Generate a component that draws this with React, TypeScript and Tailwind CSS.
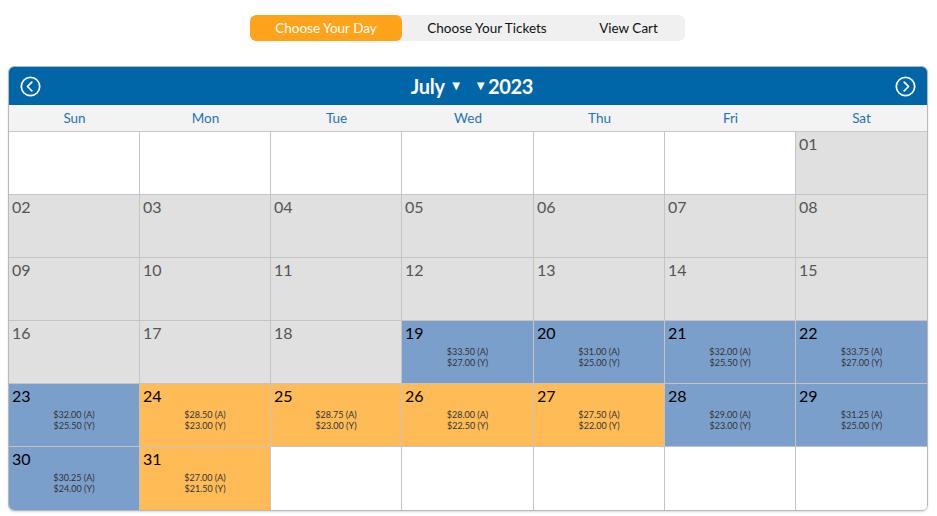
import React from 'react';

type Cell = { day?: string; kind: 'empty' | 'past' | 'blue' | 'orange'; a?: string; y?: string };

const cells: Cell[] = [
  ...Array.from({ length: 6 }, () => ({ kind: 'empty' as const })),
  ...['01','02','03','04','05','06','07','08','09','10','11','12','13','14','15','16','17','18'].map(d => ({ day: d, kind: 'past' as const })),
  { day: '19', kind: 'blue', a: '$33.50', y: '$27.00' },
  { day: '20', kind: 'blue', a: '$31.00', y: '$25.00' },
  { day: '21', kind: 'blue', a: '$32.00', y: '$25.50' },
  { day: '22', kind: 'blue', a: '$33.75', y: '$27.00' },
  { day: '23', kind: 'blue', a: '$32.00', y: '$25.50' },
  { day: '24', kind: 'orange', a: '$28.50', y: '$23.00' },
  { day: '25', kind: 'orange', a: '$28.75', y: '$23.00' },
  { day: '26', kind: 'orange', a: '$28.00', y: '$22.50' },
  { day: '27', kind: 'orange', a: '$27.50', y: '$22.00' },
  { day: '28', kind: 'blue', a: '$29.00', y: '$23.00' },
  { day: '29', kind: 'blue', a: '$31.25', y: '$25.00' },
  { day: '30', kind: 'blue', a: '$30.25', y: '$24.00' },
  { day: '31', kind: 'orange', a: '$27.00', y: '$21.50' },
  ...Array.from({ length: 5 }, () => ({ kind: 'empty' as const })),
];

const days = ['Sun', 'Mon', 'Tue', 'Wed', 'Thu', 'Fri', 'Sat'];

const bg: Record<Cell['kind'], string> = {
  empty: 'bg-white',
  past: 'bg-[#e0e0e0]',
  blue: 'bg-[#7b9fcb]',
  orange: 'bg-[#ffbb55]',
};

const Arrow = ({ dir }: { dir: 'left' | 'right' }) => (
  <svg width="21" height="21" viewBox="0 0 24 24" fill="none" stroke="white" strokeWidth="2" strokeLinecap="round" strokeLinejoin="round">
    <circle cx="12" cy="12" r="10.5" />
    {dir === 'left' ? <path d="M13.5 7l-5 5 5 5" /> : <path d="M10.5 7l5 5-5 5" />}
  </svg>
);

const cols = 'grid grid-cols-[131px_131px_131px_132px_131px_131px_131px]';

const App: React.FC = () => {
  return (
    <div className="w-[937px] h-[516px] bg-white pt-[15px] font-['Lato',sans-serif]">
      {/* Steps */}
      <div className="ml-[250px] flex w-[435px] h-[26px] rounded-md bg-[#f0f0f0] overflow-hidden text-[13.5px]">
        <div className="w-[152px] bg-[#ffa31a] text-white flex items-center justify-center rounded-md">Choose Your Day</div>
        <div className="w-[170px] flex items-center justify-center text-[#111]">Choose Your Tickets</div>
        <div className="flex-1 flex items-center justify-center text-[#111]">View Cart</div>
      </div>

      {/* Calendar */}
      <div className="mt-[25px] ml-[8px] w-[920px] rounded-md border border-[#b9b9b9] overflow-hidden shadow-[0_1px_2px_rgba(0,0,0,0.15)]">
        <div className="h-[38px] bg-[#0066a8] flex items-center justify-between px-[11px]">
          <Arrow dir="left" />
          <div className="text-white font-bold text-[20px] tracking-[-0.3px] flex items-center ml-[8px]">
            <span>July</span>
            <span className="text-[13px] ml-[5px]">▼</span>
            <span className="text-[13px] ml-[12px]">▼</span>
            <span className="ml-[1px]">2023</span>
          </div>
          <Arrow dir="right" />
        </div>
        <div className={`${cols} h-[27px] bg-[#f3f3f3] border-b border-[#c8c8c8]`}>
          {days.map(d => (
            <div key={d} className="flex items-center justify-center text-[13.5px] text-[#1f73b5]">{d}</div>
          ))}
        </div>
        <div className={cols}>
          {cells.map((c, i) => (
            <div
              key={i}
              className={`h-[63px] ${bg[c.kind]} ${i % 7 !== 6 ? 'border-r' : ''} ${i < 35 ? 'border-b' : ''} border-[#c4c4c4] px-[3px] pt-[2px]`}
            >
              {c.day && (
                <div className={`text-[16px] leading-[20px] ${c.kind === 'past' ? 'text-[#555]' : 'text-black'}`}>{c.day}</div>
              )}
              {c.a && (
                <div className="mt-[3px] text-center text-[9px] leading-[11px] text-[#333]">
                  <div>{c.a} (A)</div>
                  <div>{c.y} (Y)</div>
                </div>
              )}
            </div>
          ))}
        </div>
      </div>
    </div>
  );
};

export default App;
